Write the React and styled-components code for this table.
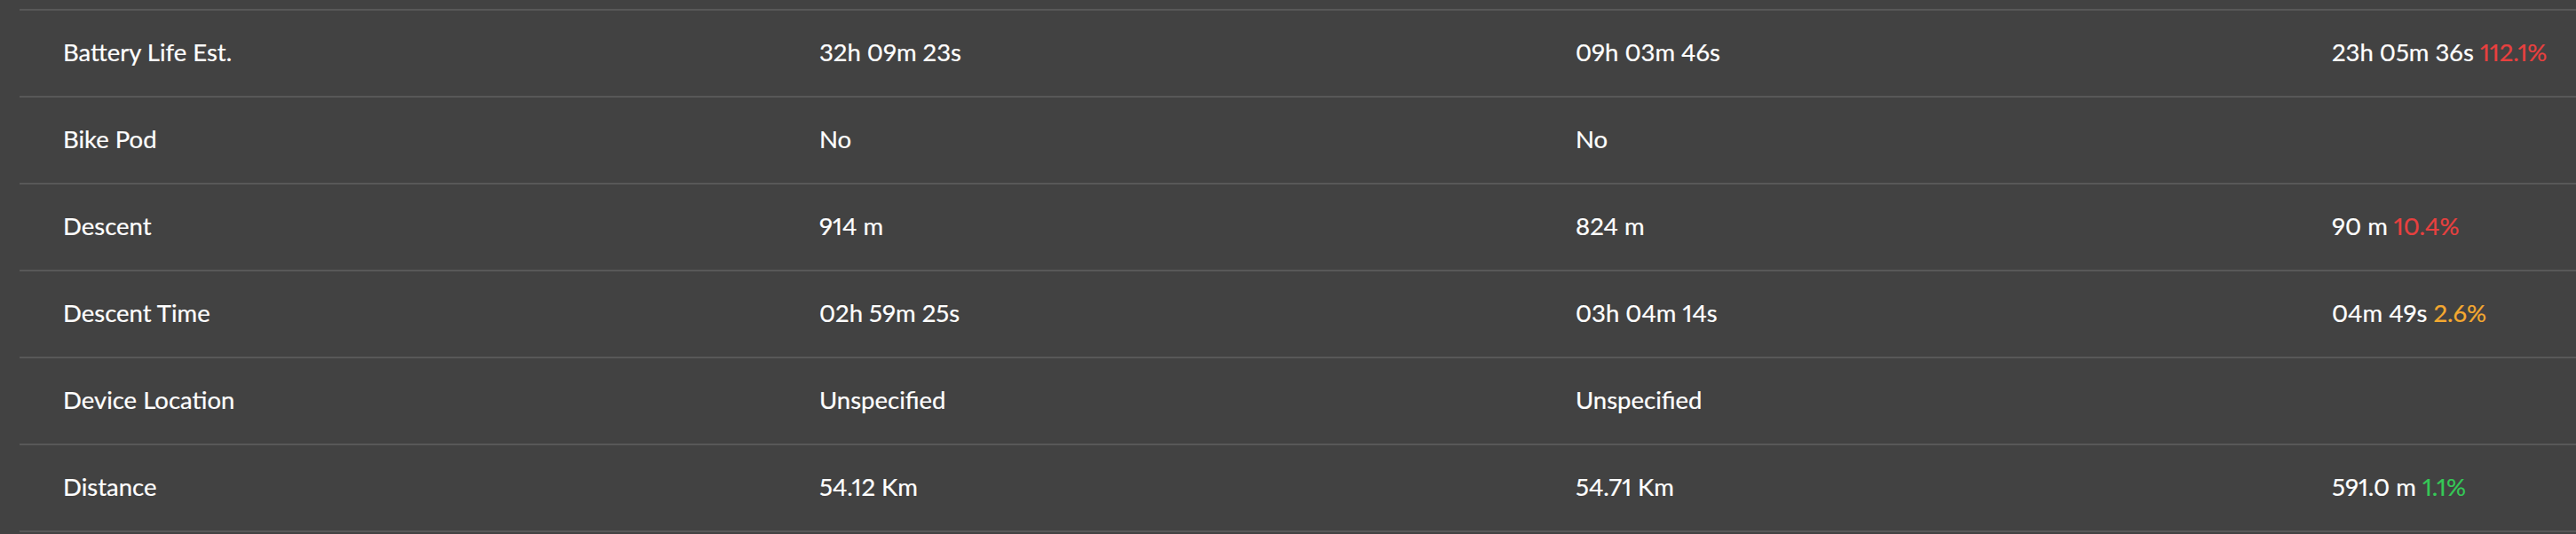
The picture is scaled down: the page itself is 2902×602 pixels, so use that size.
import styled, { createGlobalStyle } from "styled-components";

const rows = [
  { label: "Battery Life Est.", a: "32h 09m 23s", b: "09h 03m 46s", diff: "23h 05m 36s", pct: "112.1%", tone: "red" },
  { label: "Bike Pod", a: "No", b: "No" },
  { label: "Descent", a: "914 m", b: "824 m", diff: "90 m", pct: "10.4%", tone: "red" },
  { label: "Descent Time", a: "02h 59m 25s", b: "03h 04m 14s", diff: "04m 49s", pct: "2.6%", tone: "orange" },
  { label: "Device Location", a: "Unspecified", b: "Unspecified" },
  { label: "Distance", a: "54.12 Km", b: "54.71 Km", diff: "591.0 m", pct: "1.1%", tone: "green" },
];

const tones = {
  red: "#e8403f",
  orange: "#f4a930",
  green: "#35c957",
};

export default function App() {
  return (
    <>
      <GlobalStyle />
      <Page>
        <Table>
          {rows.map((row) => (
            <Row key={row.label}>
              <Cell>{row.label}</Cell>
              <Cell>{row.a}</Cell>
              <Cell>{row.b}</Cell>
              <Cell>
                {row.diff}
                {row.pct && <Percent $tone={row.tone}> {row.pct}</Percent>}
              </Cell>
            </Row>
          ))}
        </Table>
      </Page>
    </>
  );
}

const GlobalStyle = createGlobalStyle`
  html, body {
    margin: 0;
    padding: 0;
    background: #424242;
    overflow: hidden;
  }
`;

const Page = styled.div`
  width: 2902px;
  height: 602px;
  padding-top: 10px;
  box-sizing: border-box;
  background: #424242;
  overflow: hidden;
  font-family: "Lato", "Liberation Sans", sans-serif;
`;

const Table = styled.div`
  margin-left: 22px;
  width: 3408px;
  border-bottom: 2px solid #585858;
`;

const Row = styled.div`
  display: grid;
  grid-template-columns: repeat(4, 852px);
  align-items: center;
  height: 96px;
  border-top: 2px solid #585858;
`;

const Cell = styled.div`
  padding-left: 49px;
  padding-bottom: 3px;
  color: #ffffff;
  font-size: 27.5px;
  line-height: 32px;
  font-variant-numeric: proportional-nums;
  white-space: nowrap;
  -webkit-text-stroke: 0.2px #ffffff;
`;

const Percent = styled.span`
  color: ${(p) => tones[p.$tone]};
  -webkit-text-stroke: 0.2px ${(p) => tones[p.$tone]};
`;
